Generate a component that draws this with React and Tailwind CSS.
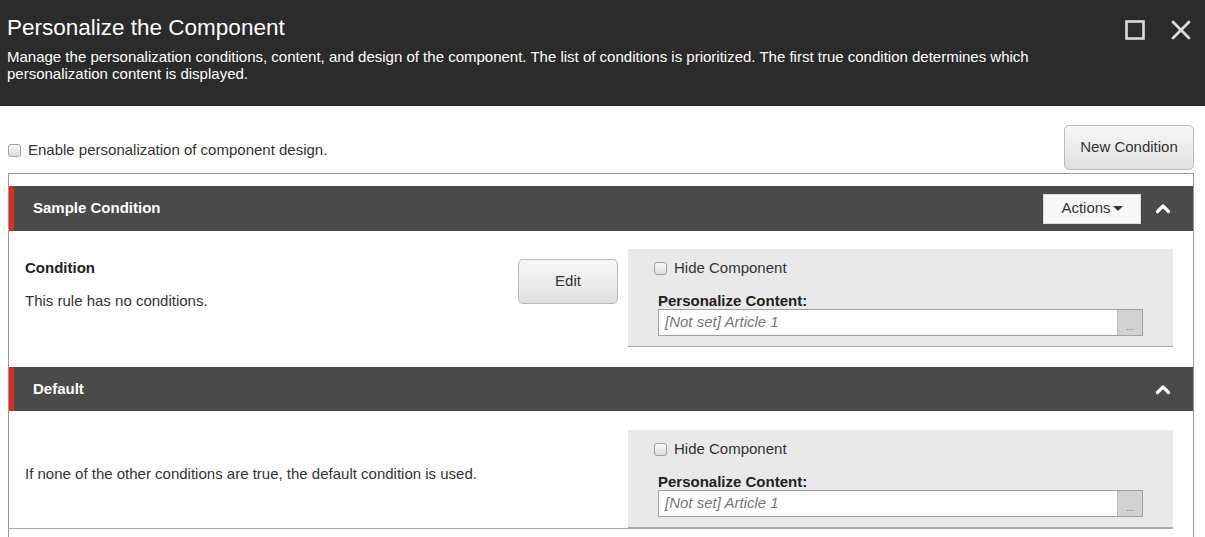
import React from "react";

const font = { fontFamily: '"Liberation Sans", Arial, sans-serif' };

function Check({ className = "" }) {
  return (
    <span
      className={`inline-block w-[13px] h-[13px] rounded-[3px] border border-[#a0a0a0] bg-gradient-to-b from-[#fafafa] to-[#dcdcdc] ${className}`}
    />
  );
}

function ChevronUp() {
  return (
    <svg width="16" height="11" viewBox="0 0 16 11">
      <polyline points="2.5,8.5 8,3 13.5,8.5" fill="none" stroke="#fff" strokeWidth="3.2" strokeLinecap="round" strokeLinejoin="round" />
    </svg>
  );
}

function SectionHeader({ title, actions, h }) {
  return (
    <div className={`flex items-center ${h} bg-[#4a4a4a]`}>
      <div className="w-[5px] h-full bg-[#dc2a1f]" />
      <div className="ml-[19px] flex-1 text-white font-bold text-[15px]">{title}</div>
      {actions && (
        <div className="flex items-center justify-center w-[98px] h-[30px] bg-[#f7f7f7] border border-[#ddd] text-[#333] text-[15px]">
          Actions
          <svg width="10" height="6" viewBox="0 0 10 6" className="ml-[2px] mt-[1px]">
            <polygon points="0,0 10,0 5,5" fill="#333" />
          </svg>
        </div>
      )}
      <div className="w-[44px] flex justify-center mr-[8px]">
        <ChevronUp />
      </div>
    </div>
  );
}

function Panel() {
  return (
    <div className="w-[545px] bg-[#e9e9e9] border-b border-[#aaa] pl-[26px] pr-[30px] pt-[9px] pb-[10px]">
      <div className="flex items-center h-[20px]">
        <Check />
        <span className="ml-[7px] text-[15px] text-[#333]">Hide Component</span>
      </div>
      <div className="pl-[4px] mt-[14px]">
        <div className="font-bold text-[15px] text-[#222] leading-[17px]">Personalize Content:</div>
        <div className="flex h-[27px] border border-[#a0a0a0] bg-white">
          <div className="flex-1 flex items-center pl-[6px] italic text-[15px] text-[#777]">[Not set] Article 1</div>
          <div className="w-[25px] bg-[#d2d2d2] border-l border-[#bbb] flex items-end justify-center pb-[3px] text-[9px] text-[#666] leading-none">
            ...
          </div>
        </div>
      </div>
    </div>
  );
}

export default function App() {
  return (
    <div style={font} className="w-[1205px] h-[537px] overflow-hidden bg-white text-[#333]">
      <div className="h-[106px] bg-[#2b2b2b] pl-[7px] pr-[14px] flex">
        <div className="flex-1">
          <div className="text-white text-[22.5px] leading-[28px] mt-[14px]">Personalize the Component</div>
          <div className="text-white text-[15px] leading-[17px] mt-[6px] w-[1090px]">
            Manage the personalization conditions, content, and design of the component. The list of conditions is prioritized. The first true condition determines which personalization content is displayed.
          </div>
        </div>
        <div className="flex items-start pt-[20px] gap-[26px]">
          <svg width="20" height="20" viewBox="0 0 20 20">
            <rect x="1.5" y="1.5" width="17" height="17" fill="none" stroke="#dcdcdc" strokeWidth="2.6" />
          </svg>
          <svg width="20" height="20" viewBox="0 0 20 20">
            <path d="M2 2 L18 18 M18 2 L2 18" stroke="#dcdcdc" strokeWidth="2.8" strokeLinecap="round" />
          </svg>
        </div>
      </div>

      <div className="flex items-end h-[64px] pl-[8px] pr-[11px] pt-[19px]">
        <div className="flex-1 flex items-center h-[45px] mt-auto pb-[2px]">
          <div className="flex items-center mt-[8px]">
            <Check />
            <span className="ml-[7px] text-[15px] text-[#333]">Enable personalization of component design.</span>
          </div>
        </div>
        <div className="flex items-center justify-center w-[130px] h-[45px] rounded-[5px] border border-[#bbb] bg-gradient-to-b from-[#f8f8f8] to-[#e0e0e0] text-[15px] text-[#333]">
          New Condition
        </div>
      </div>

      <div className="ml-[8px] w-[1186px] mt-[3px] border-l border-r border-t border-[#999] h-[400px] pt-[12px]">
        <SectionHeader title="Sample Condition" actions h="h-[45px]" />
        <div className="flex pt-[18px] pb-[20px] pl-[16px] pr-[20px]">
          <div className="flex-1 pt-[10px]">
            <div className="font-bold text-[15px] text-[#222] leading-[18px]">Condition</div>
            <div className="text-[15px] text-[#333] leading-[18px] mt-[15px]">This rule has no conditions.</div>
          </div>
          <div className="pt-[10px] mr-[10px]">
            <div className="flex items-center justify-center w-[100px] h-[45px] rounded-[5px] border border-[#bbb] bg-gradient-to-b from-[#f8f8f8] to-[#e0e0e0] text-[15px] text-[#333]">
              Edit
            </div>
          </div>
          <Panel />
        </div>
        <SectionHeader title="Default" h="h-[44px]" />
        <div className="flex pt-[19px] border-b border-[#aaa] mr-[20px]">
          <div className="flex-1 flex items-center pl-[16px] pb-[9px] text-[15px] text-[#333]">
            If none of the other conditions are true, the default condition is used.
          </div>
          <Panel />
        </div>
      </div>
    </div>
  );
}
